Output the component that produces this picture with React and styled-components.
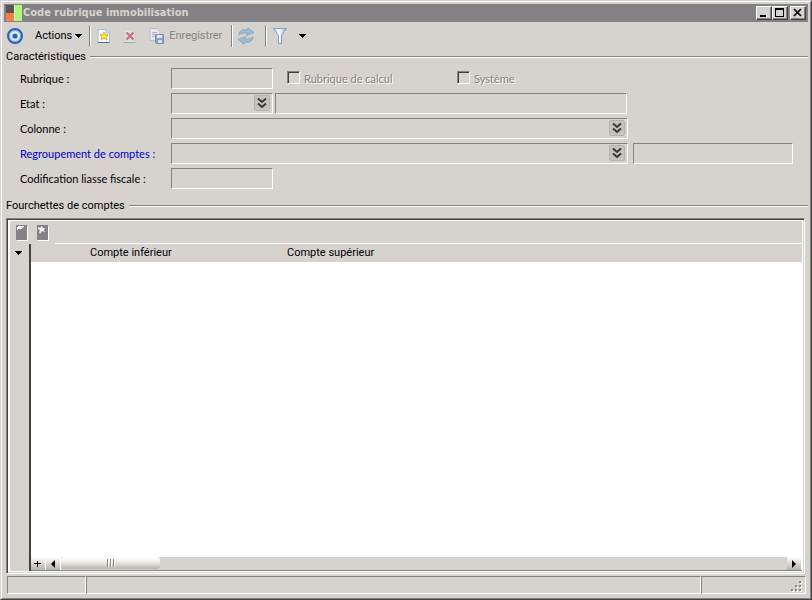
import React from "react";
import styled, {createGlobalStyle} from "styled-components";

const GlobalStyle = createGlobalStyle`
  * {
    box-sizing: border-box;
  }

  body {
    margin: 0;
    background: #d6d3ce;
    color: #000;
    font-family: Roboto, "Liberation Sans", sans-serif;
    font-size: 11px;
    line-height: 14px;
  }

  button, input, select {
    font: inherit;
    color: inherit;
  }
`;

const Frame = styled.div`
  display: flex;
  min-height: 100vh;
  border: 1px solid;
  border-color: #d6d3ce #424142 #424142 #d6d3ce;
`;

const Window = styled.main`
  display: flex;
  flex: 1;
  flex-direction: column;
  min-width: 0;
  padding: 2px 2px 4px;
  border: 1px solid;
  border-color: #fff #848284 #848284 #fff;
`;

const TitleBar = styled.header`
  display: flex;
  align-items: center;
  height: 18px;
  padding-right: 2px;
  background: #848284;
`;

const Title = styled.h1`
  flex: 1;
  margin: 0;
  padding-left: 1px;
  color: #d6d3ce;
  font-family: "DejaVu Sans Condensed", "DejaVu Sans", sans-serif;
  font-size: 11px;
  font-weight: bold;
`;

const WindowButton = styled.button`
  display: flex;
  width: 16px;
  height: 14px;
  margin-left: ${({$spaced}) => ($spaced ? "2px" : "0")};
  padding: 0;
  background: #d6d3ce;
  border: 1px solid;
  border-color: #fff #424142 #424142 #fff;
  box-shadow: inset -1px -1px #848284;
`;

const Toolbar = styled.div`
  display: flex;
  align-items: center;
  height: 28px;
  padding-left: 1px;
`;

const ToolButton = styled.button`
  display: flex;
  align-items: center;
  gap: ${({$gap}) => $gap || 0}px;
  height: 22px;
  padding: 0 ${({$pad}) => ($pad === undefined ? 5 : $pad)}px;
  color: ${({disabled}) => (disabled ? "#848284" : "#000")};
  background: none;
  border: 0;
`;

const MenuButton = styled(ToolButton)`
  padding: 0 7px 0 10px;
`;

const Separator = styled.span`
  width: 2px;
  height: 22px;
  margin: 0 ${({$after}) => $after || 0}px 0 ${({$before}) => $before || 0}px;
  border-left: 1px solid #848284;
  border-right: 1px solid #fff;
`;

const Section = styled.section`
  display: flex;
  flex-direction: column;
  flex: ${({$grow}) => ($grow ? 1 : "none")};
`;

const SectionTitle = styled.h2`
  display: flex;
  align-items: center;
  gap: 4px;
  margin: 0;
  padding-left: 2px;
  font-size: 11px;
  font-weight: normal;

  &::after {
    content: "";
    flex: 1;
    border-top: 1px solid #848284;
    border-bottom: 1px solid #fff;
  }
`;

const Form = styled.form`
  display: flex;
  flex-direction: column;
  gap: 4px;
  padding: 4px 8px 10px 16px;
`;

const Row = styled.div`
  display: flex;
  align-items: center;
  height: 21px;
`;

const Label = styled.label`
  width: 151px;
  padding-top: 1px;
  color: ${({$link}) => ($link ? "#0000c8" : "#000")};
  font-family: Lato, "Liberation Sans", sans-serif;
`;

const Field = styled.input`
  width: ${({$width}) => $width}px;
  height: 21px;
  margin-left: ${({$gap}) => $gap || 0}px;
  padding: 2px 3px;
  background: #d6d3ce;
  border: 1px solid;
  border-color: #848284 #fff #fff #848284;
  border-radius: 0;
`;

const Combo = styled.span`
  position: relative;
  width: ${({$width}) => $width}px;
  height: 21px;

  svg {
    position: absolute;
    top: 2px;
    right: 3px;
    pointer-events: none;
  }
`;

const Select = styled.select`
  display: block;
  width: 100%;
  height: 21px;
  appearance: none;
  background: #d6d3ce;
  border: 1px solid;
  border-color: #848284 #fff #fff #848284;
  border-radius: 0;
  opacity: 1;
`;

const CheckLabel = styled.label`
  display: flex;
  align-items: center;
  gap: 4px;
  width: 170px;
  margin-left: ${({$gap}) => $gap || 0}px;
  padding-top: 1px;
  color: #848284;
  font-family: Lato, "Liberation Sans", sans-serif;
  text-shadow: 1px 1px #fff;
`;

const Checkbox = styled.input`
  width: 13px;
  height: 13px;
  margin: 0 0 3px;
  appearance: none;
  background: #d6d3ce;
  border: 1px solid;
  border-color: #848284 #fff #fff #848284;
  box-shadow: inset 1px 1px #424142;
`;

const GridPanel = styled.div`
  display: flex;
  flex: 1;
  flex-direction: column;
  margin: 5px 3px 2px 2px;
  padding: 2px;
  background: #fff;
  border: 1px solid;
  border-color: #848284 #fff #fff #848284;
  box-shadow: inset 1px 1px #424142, inset -1px -1px #d6d3ce;
`;

const GridTools = styled.div`
  display: flex;
  height: 23px;
  margin-left: 1px;
  background: #d6d3ce;

  &::after {
    content: "";
    flex: 1;
    margin-left: 3px;
    border-bottom: 1px solid #fff;
  }
`;

const GridToolButton = styled.button`
  display: flex;
  align-items: center;
  width: 21px;
  padding: 0 0 0 5px;
  background: none;
  border: 0;
`;

const GridBody = styled.div`
  display: flex;
  flex: 1;
  margin-left: 1px;
`;

const Gutter = styled.div`
  width: 21px;
  background: #d6d3ce;
  border-right: 2px solid #424142;
`;

const GutterButton = styled.button`
  display: flex;
  align-items: center;
  justify-content: center;
  width: 16px;
  height: 18px;
  padding: 0;
  background: none;
  border: 0;
`;

const GridContent = styled.div`
  display: flex;
  flex: 1;
  flex-direction: column;
  justify-content: space-between;
`;

const Table = styled.table`
  width: 100%;
  table-layout: fixed;
  border-collapse: collapse;
`;

const HeadCell = styled.th`
  width: ${({$width}) => ($width ? `${$width}px` : "auto")};
  height: 18px;
  padding: 0;
  background: #d6d3ce;
  font-weight: normal;
  text-align: left;
`;

const ScrollBar = styled.div`
  display: flex;
  height: 14px;
  background: #d6d3ce;
  border-bottom: 1px solid #848284;
`;

const ScrollButton = styled.button`
  display: flex;
  align-items: center;
  justify-content: center;
  width: 15px;
  padding: 0;
  background: linear-gradient(#fff, #b5b2ad);
  border: 0;
  border-right: 1px solid #fff;
`;

const Track = styled.div`
  flex: 1;
`;

const Thumb = styled.div`
  display: flex;
  align-items: center;
  justify-content: center;
  width: 99px;
  height: 12px;
  background: linear-gradient(#fff, #efefe9 40%, #b5b4aa);
  border-radius: 3px;
`;

const StatusBar = styled.footer`
  display: flex;
  height: 18px;
  margin: 0 2px 0 3px;
`;

const StatusCell = styled.div`
  display: flex;
  align-items: flex-end;
  justify-content: flex-end;
  flex: ${({$width}) => ($width ? `0 0 ${$width}px` : 1)};
  border: 1px solid;
  border-color: #848284 #fff #fff #848284;
`;

const Logo = () => (
    <svg width="18" height="18" viewBox="0 0 18 18" aria-hidden="true">
        <path fill="#848284" d="M0 0h18v18H0z"/>
        <path fill="#5a5552" d="M2 1h8v8H2z"/>
        <path fill="#ff7b42" d="M2 9h8v8H2z"/>
        <path fill="#adf77b" d="M10 1h8v16h-8z"/>
        <path stroke="#efefe0" d="M10.500 1v16"/>
    </svg>
);

const TargetIcon = () => (
    <svg width="18" height="18" viewBox="0 0 18 18" aria-hidden="true">
        <circle cx="9" cy="9" r="7" fill="#e7efff" stroke="#2863b5" strokeWidth="2"/>
        <circle cx="9" cy="9" r="5.500" fill="none" stroke="#6f9fdf"/>
        <circle cx="9" cy="9" r="2.600" fill="#2863b5"/>
    </svg>
);

const DownArrow = () => (
    <svg width="8" height="4" viewBox="0 0 8 4" shapeRendering="crispEdges" aria-hidden="true">
        <path d="M0 0h8L4 4z"/>
    </svg>
);

const NewIcon = () => (
    <svg width="16" height="16" viewBox="0 0 16 16" aria-hidden="true">
        <path d="M2 1.500h8l3.500 3.500v9.500H2z" fill="#f4f8ff" stroke="#a9bcda"/>
        <path d="M2 14.500h11.500" stroke="#456caf"/>
        <path d="M10 1.500V5h3.500" fill="#d0def4" stroke="#a9bcda"/>
        <path d="M8 4l1.300 2.600 2.900.3-2.100 1.900.7 3L8 10.300l-2.800 1.500.7-3-2.100-1.900 2.900-.3z" fill="#ffe62e" stroke="#c8a82b" strokeWidth=".8"/>
    </svg>
);

const DeleteIcon = () => (
    <svg width="16" height="16" viewBox="0 0 16 16" opacity=".65" aria-hidden="true">
        <path d="M2 1.500h8l3.500 3.500v9.500H2z" fill="#e3e5ea" stroke="#c3c9d4"/>
        <path d="M2 14.500h11.500" stroke="#8493ad"/>
        <path d="M4.500 4.500l7 7m0-7l-7 7" stroke="#c43f55" strokeWidth="2.400"/>
    </svg>
);

const SaveIcon = () => (
    <svg width="18" height="16" viewBox="0 0 18 16" opacity=".65" aria-hidden="true">
        <path d="M2 .500h7l3 3v9H2z" fill="#edf2fc" stroke="#a5b5d3"/>
        <path d="M4 4.500h5M4 6.500h6M4 8.500h4" stroke="#8ba0c8"/>
        <path d="M7.500 6.500h8v9h-7l-1-1z" fill="#6983c0" stroke="#5269a2"/>
        <path d="M9 7h5v3H9z" fill="#eef3ff"/>
        <path d="M10 12h4v3h-4z" fill="#dce3f3"/>
    </svg>
);

const RefreshIcon = () => (
    <svg width="18" height="18" viewBox="0 0 18 18" fill="#9dbdd4" stroke="#7f9fc0" strokeWidth=".8" aria-hidden="true">
        <path d="M2 8c0-4 3.500-6 8-5l1-2 6 4.500-7.500 3 1-2.300C7.500 5.500 5 6 2 8z"/>
        <path d="M16 10c0 4-3.500 6-8 5l-1 2-6-4.500 7.500-3-1 2.300c3 .7 5.500.2 8.500-1.800z"/>
    </svg>
);

const FilterIcon = () => (
    <svg width="16" height="18" viewBox="0 0 16 18" aria-hidden="true">
        <defs>
            <linearGradient id="funnel">
                <stop offset="0" stopColor="#b6d0f8"/>
                <stop offset=".45" stopColor="#fff"/>
                <stop offset="1" stopColor="#83a6de"/>
            </linearGradient>
        </defs>
        <path d="M1.500 1.500h13L9.500 8.500v8h-3v-8z" fill="url(#funnel)" stroke="#7f9dce"/>
    </svg>
);

const ComboArrow = () => (
    <svg width="16" height="16" viewBox="0 0 16 16" aria-hidden="true">
        <rect x=".5" y=".5" width="15" height="15" rx="1.500" fill="#c6c3be" stroke="#b5b2ad"/>
        <path d="M4 3.500l4 3.500 4-3.500M4 8.500l4 3.500 4-3.500" fill="none" stroke="#393639" strokeWidth="2"/>
    </svg>
);

const GridPageIcon = ({withStar}) => (
    <svg width="14" height="16" viewBox="0 0 14 16" aria-hidden="true">
        <path fill="#fff" d="M2 2h11v14H2z"/>
        <path fill="#848284" d="M1 0h11v15H1z"/>
        {withStar
            ? <path fill="#efefef" d="M2 2l2 1 2-2 1 2h2L8 5l1 2-3-1-2 3-1-2 1-2-2-1z"/>
            : <path fill="#efefef" d="M3 1h6v1H8L7 4H3v1H2V2h1z"/>}
    </svg>
);

const ComboBox = ({id, width}) => (
    <Combo $width={width}>
        <Select id={id} disabled/>
        <ComboArrow/>
    </Combo>
);

const App = () => {

    return (
        <>
            <GlobalStyle/>
            <Frame>
                <Window>
                    <TitleBar>
                        <Logo/>
                        <Title>Code rubrique immobilisation</Title>
                        <WindowButton aria-label="Réduire">
                            <svg width="14" height="12"><path d="M3 8h6v2H3z"/></svg>
                        </WindowButton>
                        <WindowButton aria-label="Agrandir">
                            <svg width="14" height="12" shapeRendering="crispEdges">
                                <path d="M2 1h9v9H2zM3 3v6h7V3z" fillRule="evenodd"/>
                            </svg>
                        </WindowButton>
                        <WindowButton $spaced aria-label="Fermer">
                            <svg width="14" height="12">
                                <path d="M3 2l7 7m0-7l-7 7" stroke="#000" strokeWidth="1.700"/>
                            </svg>
                        </WindowButton>
                    </TitleBar>

                    <Toolbar>
                        <ToolButton $pad={1} aria-label="Accueil"><TargetIcon/></ToolButton>
                        <MenuButton $gap={2}>Actions <DownArrow/></MenuButton>
                        <Separator/>
                        <ToolButton aria-label="Nouveau"><NewIcon/></ToolButton>
                        <ToolButton disabled aria-label="Supprimer"><DeleteIcon/></ToolButton>
                        <ToolButton disabled $gap={3}><SaveIcon/> Enregistrer</ToolButton>
                        <Separator $before={4} $after={4}/>
                        <ToolButton $pad={0} aria-label="Actualiser"><RefreshIcon/></ToolButton>
                        <Separator $before={10} $after={5}/>
                        <ToolButton $pad={0} aria-label="Filtrer"><FilterIcon/></ToolButton>
                        <ToolButton $pad={10} aria-label="Options du filtre"><DownArrow/></ToolButton>
                    </Toolbar>

                    <Section>
                        <SectionTitle>Caractéristiques</SectionTitle>
                        <Form>
                            <Row>
                                <Label htmlFor="rubrique">Rubrique :</Label>
                                <Field id="rubrique" $width={102} disabled/>
                                <CheckLabel $gap={14}>
                                    <Checkbox type="checkbox" disabled/>
                                    Rubrique de calcul
                                </CheckLabel>
                                <CheckLabel>
                                    <Checkbox type="checkbox" disabled/>
                                    Système
                                </CheckLabel>
                            </Row>
                            <Row>
                                <Label htmlFor="etat">Etat :</Label>
                                <ComboBox id="etat" width={102}/>
                                <Field $gap={2} $width={352} aria-label="Libellé état" disabled/>
                            </Row>
                            <Row>
                                <Label htmlFor="colonne">Colonne :</Label>
                                <ComboBox id="colonne" width={457}/>
                            </Row>
                            <Row>
                                <Label htmlFor="regroupement" $link>Regroupement de comptes :</Label>
                                <ComboBox id="regroupement" width={457}/>
                                <Field $gap={5} $width={160} aria-label="Libellé regroupement" disabled/>
                            </Row>
                            <Row>
                                <Label htmlFor="codification">Codification liasse fiscale :</Label>
                                <Field id="codification" $width={102} disabled/>
                            </Row>
                        </Form>
                    </Section>

                    <Section $grow>
                        <SectionTitle>Fourchettes de comptes</SectionTitle>
                        <GridPanel>
                            <GridTools>
                                <GridToolButton aria-label="Ajouter une ligne"><GridPageIcon/></GridToolButton>
                                <GridToolButton aria-label="Insérer une ligne"><GridPageIcon withStar/></GridToolButton>
                            </GridTools>
                            <GridBody>
                                <Gutter>
                                    <GutterButton aria-label="Menu de la grille"><DownArrow/></GutterButton>
                                </Gutter>
                                <GridContent>
                                    <Table>
                                        <thead>
                                            <tr>
                                                <HeadCell as="td" $width={59}/>
                                                <HeadCell $width={197}>Compte inférieur</HeadCell>
                                                <HeadCell>Compte supérieur</HeadCell>
                                            </tr>
                                        </thead>
                                    </Table>
                                    <ScrollBar>
                                        <ScrollButton aria-label="Ajouter">
                                            <svg width="8" height="8"><path d="M3 1h1v2h3v1H4v3H3V4H0V3h3z"/></svg>
                                        </ScrollButton>
                                        <ScrollButton aria-label="Défiler à gauche">
                                            <svg width="4" height="8"><path d="M4 0v8L0 4z"/></svg>
                                        </ScrollButton>
                                        <Track>
                                            <Thumb>
                                                <svg width="8" height="8">
                                                    <path d="M.5 0v8m3-8v8m3-8v8" stroke="#848284"/>
                                                    <path d="M1.500 0v8m3-8v8m3-8v8" stroke="#fff"/>
                                                </svg>
                                            </Thumb>
                                        </Track>
                                        <ScrollButton aria-label="Défiler à droite">
                                            <svg width="4" height="8"><path d="M0 0v8l4-4z"/></svg>
                                        </ScrollButton>
                                    </ScrollBar>
                                </GridContent>
                            </GridBody>
                        </GridPanel>
                    </Section>

                    <StatusBar>
                        <StatusCell $width={79}/>
                        <StatusCell/>
                        <StatusCell $width={105}>
                            <svg width="14" height="12" aria-hidden="true">
                                <path fill="#fff" d="M9 1h2v2H9zM5 5h2v2H5zM9 5h2v2H9zM1 9h2v2H1zM5 9h2v2H5zM9 9h2v2H9z"/>
                                <path fill="#848284" d="M8 0h2v2H8zM4 4h2v2H4zM8 4h2v2H8zM0 8h2v2H0zM4 8h2v2H4zM8 8h2v2H8z"/>
                            </svg>
                        </StatusCell>
                    </StatusBar>
                </Window>
            </Frame>
        </>
    )

};

export default App;
